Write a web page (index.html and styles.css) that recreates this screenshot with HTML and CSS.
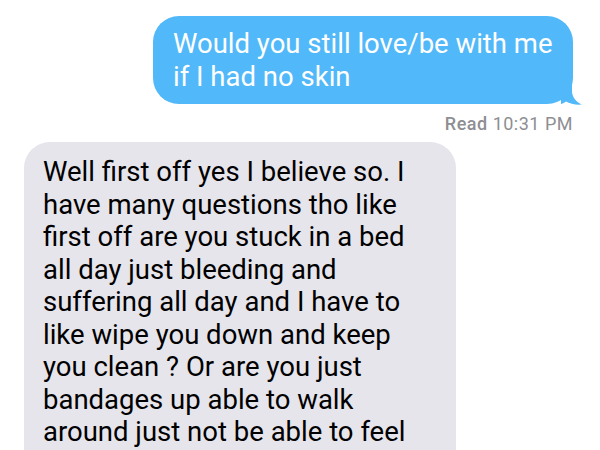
FILE: index.html
```html
<!DOCTYPE html>
<html lang="en">
<head>
  <meta charset="UTF-8">
  <title>Messages</title>
  <link rel="stylesheet" href="styles.css">
</head>
<body>
  <div class="thread">
    <div class="row sent">
      <div class="bubble blue">
        Would you still love/be with me if I had no skin
        <svg class="tail" width="22" height="22" viewBox="0 0 22 22">
          <path d="M0 0 H11 V8 C11 14 15 19 21 21.5 C15 22 9 21 5 18.5 C3 20 1 21 0 21 Z" fill="#51b8f9"/>
        </svg>
      </div>
    </div>
    <div class="receipt"><b>Read</b> 10:31 PM</div>
    <div class="row received">
      <div class="bubble gray">Well first off yes I believe so. I have many questions tho like first off are you stuck in a bed all day just bleeding and suffering all day and I have to like wipe you down and keep you clean ? Or are you just bandages up able to walk around just not be able to feel anything</div>
    </div>
  </div>
</body>
</html>
```

FILE: styles.css
```css
body {
  margin: 0;
  background-color: #fff;
  font-family: Roboto, "Noto Sans", sans-serif;
  overflow: hidden;
}

.thread {
  display: flex;
  flex-direction: column;
  padding-top: 16px;
}

.row {
  display: flex;
}

.sent {
  justify-content: flex-end;
  padding-right: 27px;
}

.received {
  justify-content: flex-start;
  padding-left: 24px;
  margin-top: 8px;
}

.bubble {
  position: relative;
  font-size: 27.5px;
  line-height: 32.5px;
  border-radius: 26px;
}

.blue {
  background-color: #51b8f9;
  color: #fff;
  width: 384px;
  padding: 12px 16px 11px 20px;
}

.tail {
  position: absolute;
  right: -10px;
  bottom: -1px;
  display: block;
}

.gray {
  background-color: #e6e5eb;
  color: #000;
  width: 394px;
  padding: 14px 19px 40px 19px;
}

.receipt {
  align-self: flex-end;
  margin-right: 27px;
  margin-top: 10px;
  font-size: 18px;
  line-height: 20px;
  letter-spacing: 0.5px;
  color: #8e8e93;
}

.receipt b {
  font-weight: 500;
}
```
